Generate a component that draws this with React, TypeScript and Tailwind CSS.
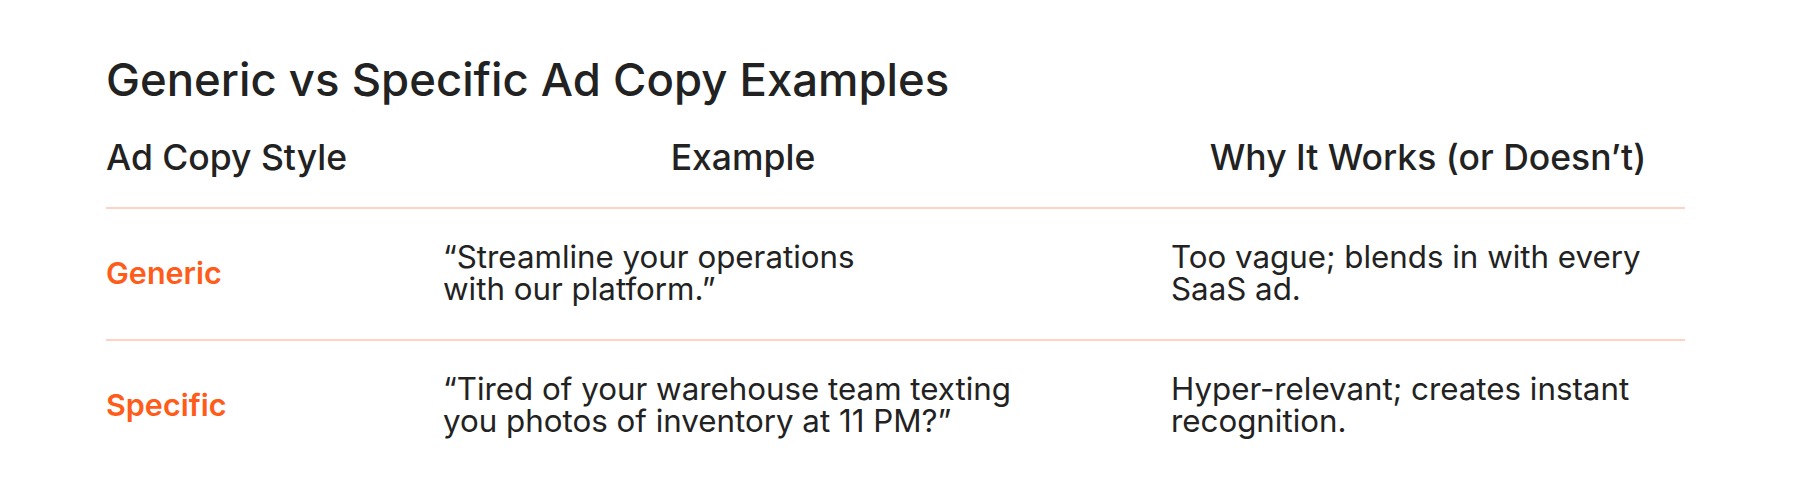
export default function App() {
  const rows = [
    {
      style: "Generic",
      example: ["“Streamline your operations", "with our platform.”"],
      why: ["Too vague; blends in with every", "SaaS ad."],
    },
    {
      style: "Specific",
      example: ["“Tired of your warehouse team texting", "you photos of inventory at 11 PM?”"],
      why: ["Hyper-relevant; creates instant", "recognition."],
    },
  ]

  return (
    <div className="w-[1800px] h-[503px] bg-white pl-[106px] pr-[115px] pt-[56px] text-[#222222] font-['Inter',sans-serif]">
      <h2 className="text-[45.5px] leading-[48px] font-medium">Generic vs Specific Ad Copy Examples</h2>

      <div className="grid grid-cols-[337px_728px_514px] pt-[36px] pb-[31px] border-b-2 border-[#ffd3c0] text-[35.5px] leading-[36px] font-medium">
        <div>Ad Copy Style</div>
        <div className="text-center pr-[128px]">Example</div>
        <div className="text-center">Why It Works (or Doesn’t)</div>
      </div>

      {rows.map((r, i) => (
        <div
          key={r.style}
          className={`grid grid-cols-[337px_728px_514px] items-center pt-[32px] pb-[34px] text-[31.3px] leading-[32px] ${i === 0 ? "border-b-2 border-[#ffd3c0]" : ""}`}
        >
          <div className="text-[#ff5c1a] font-semibold text-[30.5px]">{r.style}</div>
          <p>
            {r.example[0]}
            <br />
            {r.example[1]}
          </p>
          <p>
            {r.why[0]}
            <br />
            {r.why[1]}
          </p>
        </div>
      ))}
    </div>
  )
}
